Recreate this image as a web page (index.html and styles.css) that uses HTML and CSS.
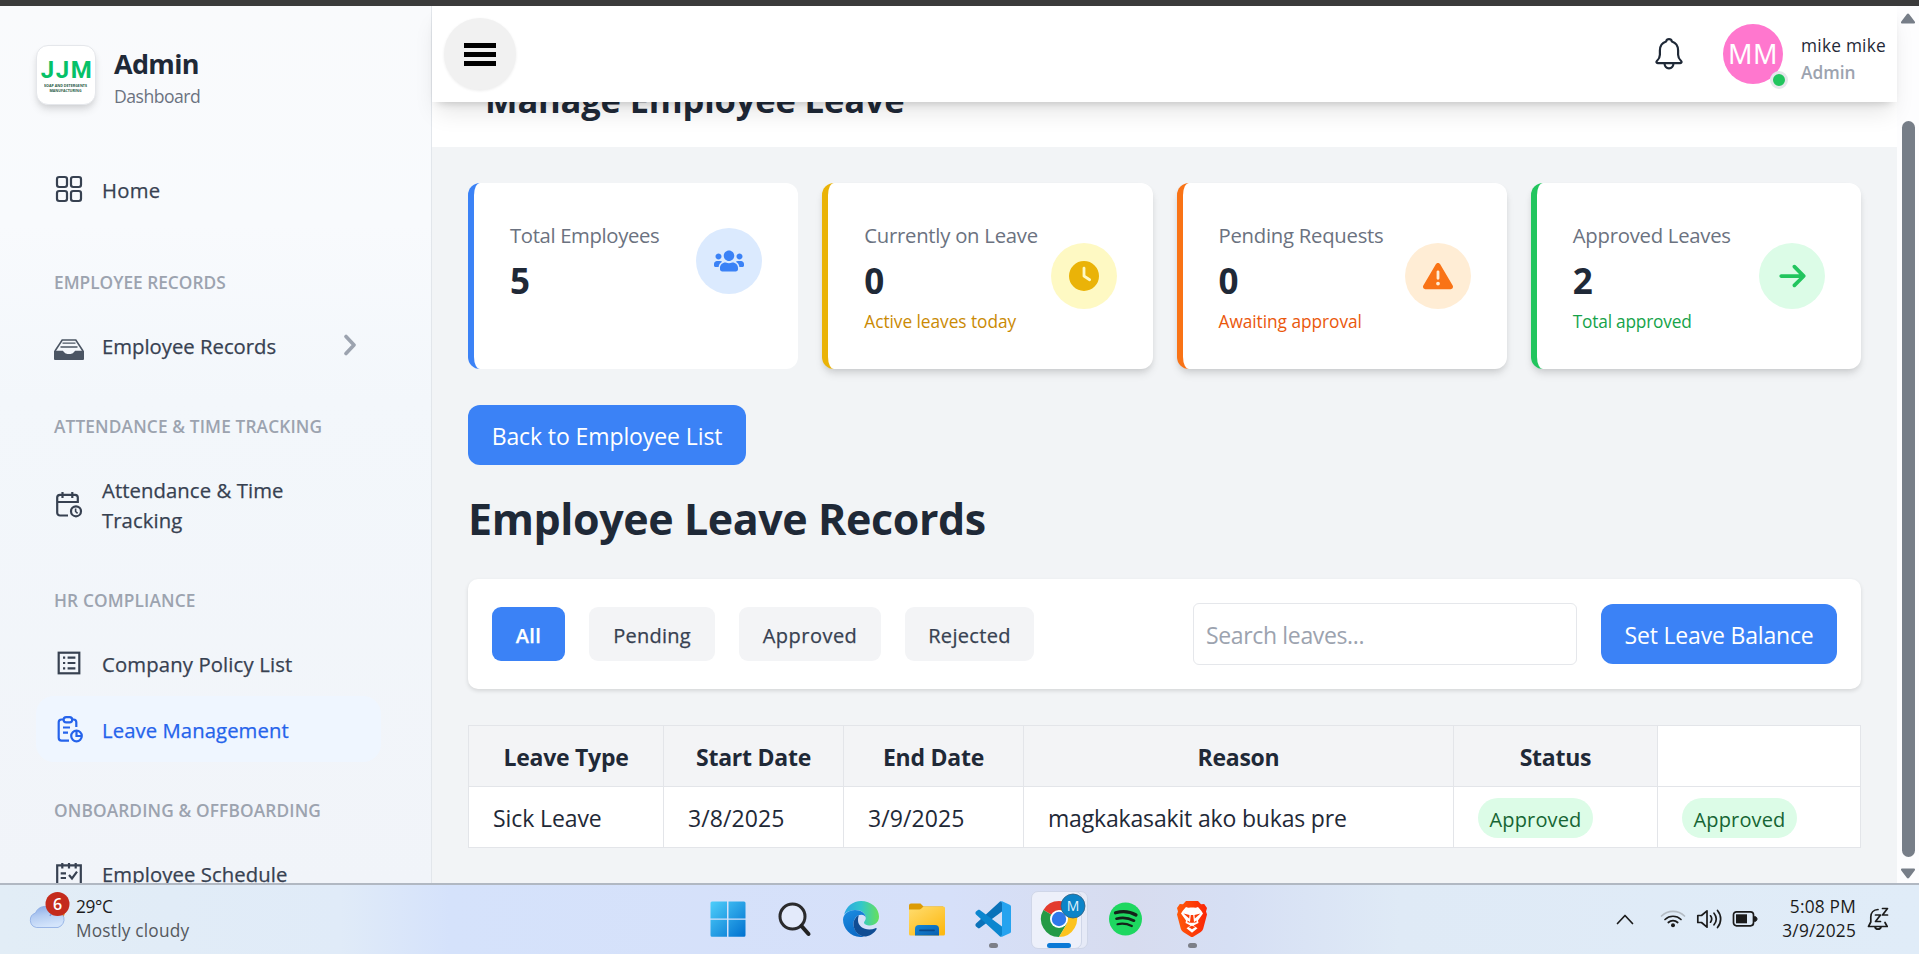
FILE: index.html
```html
<!DOCTYPE html>
<html lang="en">
<head>
<meta charset="utf-8">
<title>Manage Employee Leave</title>
<link rel="stylesheet" href="styles.css">
</head>
<body>
<div class="screen">
  <div class="window-edge"></div>
  <div class="app">
    <aside class="sidebar">
      <div class="brand">
        <div class="brand-logo">
          <span class="logo-main">JJM</span>
          <svg width="44" height="14" viewBox="0 0 44 14">
            <text class="logo-sub" x="0" y="5" textLength="43" lengthAdjust="spacingAndGlyphs">SOAP AND DETERGENTS</text>
            <text class="logo-sub" x="5.500" y="10.200" textLength="32" lengthAdjust="spacingAndGlyphs">MANUFACTURING</text>
          </svg>
        </div>
        <div class="brand-text">
          <div class="brand-title">Admin</div>
          <div class="brand-sub">Dashboard</div>
        </div>
      </div>
      <nav class="nav">
        <a class="item"><svg class="ico" viewBox="0 0 30 30"><rect x="3" y="3" width="10" height="10" rx="2.200"/><rect x="17" y="3" width="10" height="10" rx="2.200"/><rect x="3" y="17" width="10" height="10" rx="2.200"/><rect x="17" y="17" width="10" height="10" rx="2.200"/></svg><span class="ls-home">Home</span></a>

        <h3 class="group group-first">EMPLOYEE RECORDS</h3>
        <a class="item"><svg class="ico ico-tray" viewBox="0 0 30 30"><path d="M1 21 8.200 10h13.600L29 21" fill="none" stroke-width="1.600"/><path d="M8.500 13.200h13M6.500 17h17" stroke-width="1.300"/><path class="solid" d="M0 20.800h8.800l2.400 2.400 2.200.9h3.200l2.200-.9 2.400-2.400H30V29a1 1 0 0 1-1 1H1a1 1 0 0 1-1-1z"/></svg><span class="ls-rec">Employee Records</span>
          <svg class="chev" width="14" height="22" viewBox="0 0 14 22"><path d="m3 2.500 8 8.500-8 8.500"/></svg></a>

        <h3 class="group">ATTENDANCE &amp; TIME TRACKING</h3>
        <a class="item"><svg class="ico" viewBox="0 0 30 30"><path d="M14 26.500H6a2.800 2.800 0 0 1-2.800-2.800V8.600A2.800 2.800 0 0 1 6 5.800h15a2.800 2.800 0 0 1 2.800 2.800V13H3.500M8.500 3v6M18.300 3v6"/><circle cx="22" cy="22.300" r="5"/><path d="M21.600 19.500v3l2 1.800" stroke-width="1.600"/></svg><span class="ls-att">Attendance &amp; Time<br>Tracking</span></a>

        <h3 class="group">HR COMPLIANCE</h3>
        <a class="item"><svg class="ico" viewBox="0 0 30 30"><rect x="4.700" y="4.700" width="20.600" height="20.600"/><path d="M9 9.700h2.200M9 15h2.200M9 20.300h2.200M13.600 9.700h7.800M13.600 15h7.800M13.600 20.300h7.800"/></svg><span class="ls-pol">Company Policy List</span></a>
        <a class="item item-active"><svg class="ico" viewBox="0 0 30 30"><path d="M15 26.600H7.500a2.800 2.800 0 0 1-2.800-2.800V8.300a2.800 2.800 0 0 1 2.800-2.800H9M18.500 5.500h1a2.800 2.800 0 0 1 2.800 2.800V13"/><rect x="9.600" y="3.200" width="8.600" height="5.200" rx="2.600"/><path d="M9 13.500h7M9 18.700h5"/><circle cx="22.500" cy="22" r="5.300"/><path d="M22.500 16.700V22h5.300"/></svg><span class="ls-att">Leave Management</span></a>

        <h3 class="group">ONBOARDING &amp; OFFBOARDING</h3>
        <a class="item"><svg class="ico" viewBox="0 0 30 30"><path d="M3.200 7.300h23.600V27H3.200zM8.300 5v5.500M15 5v5.500M21.700 5v5.500M6.700 15.300H12M6.700 20H12"/><path d="m15 17 3 3.500 5-6.800"/></svg><span class="ls-att">Employee Schedule</span></a>
      </nav>
    </aside>

    <main class="main">
      <header class="topbar">
        <button class="burger"><i></i><i></i><i></i></button>
        <div class="account">
          <svg class="bell" width="30" height="34" viewBox="0 0 30 34"><path d="M15 2.200c1.600 0 2.600 1 2.900 2.300 4 1.300 6.200 4.800 6.200 9v4.200c0 2.700 1.200 4.600 3 6.300.9.900.5 2.100-.8 2.100H3.700c-1.300 0-1.700-1.200-.8-2.100 1.800-1.700 3-3.600 3-6.300v-4.200c0-4.200 2.200-7.700 6.200-9 .3-1.300 1.300-2.300 2.900-2.300z"/><path d="M10.500 26.500c.3 3 2 4.800 4.500 4.800s4.200-1.800 4.500-4.800"/></svg>
          <div class="avatar">MM<span class="online"></span></div>
          <div class="who"><div class="who-name">mike mike</div><div class="who-role">Admin</div></div>
        </div>
      </header>
      <div class="title-band"><h1>Manage Employee Leave</h1></div>

      <div class="content">
        <section class="cards">
          <div class="card card-blue">
            <div><div class="c-label ls-te">Total Employees</div><div class="c-num">5</div></div>
            <div class="c-ico"><svg width="30" height="30" viewBox="0 0 640 512"><path d="M96 224c35.300 0 64-28.700 64-64s-28.700-64-64-64-64 28.700-64 64 28.700 64 64 64zm448 0c35.300 0 64-28.700 64-64s-28.700-64-64-64-64 28.700-64 64 28.700 64 64 64zm32 32h-64c-17.600 0-33.500 7.100-45.100 18.600 40.300 22.100 68.900 62 75.100 109.400h66c17.700 0 32-14.300 32-32v-32c0-35.300-28.700-64-64-64zm-256 0c61.900 0 112-50.100 112-112S381.900 32 320 32 208 82.100 208 144s50.100 112 112 112zm76.800 32h-8.300c-20.800 10-43.900 16-68.500 16s-47.600-6-68.500-16h-8.300C179.600 288 128 339.600 128 403.200V432c0 26.500 21.500 48 48 48h288c26.500 0 48-21.500 48-48v-28.800c0-63.600-51.600-115.200-115.200-115.200zm-223.700-13.400C161.500 263.100 145.600 256 128 256H64c-35.300 0-64 28.700-64 64v32c0 17.700 14.300 32 32 32h65.900c6.300-47.400 34.900-87.300 75.200-109.400z"/></svg></div>
          </div>
          <div class="card card-yellow raised">
            <div><div class="c-label">Currently on Leave</div><div class="c-num">0</div><div class="c-sub">Active leaves today</div></div>
            <div class="c-ico"><svg width="30" height="30" viewBox="0 0 512 512"><path d="M256 0a256 256 0 1 1 0 512A256 256 0 1 1 256 0zM232 120V256c0 8 4 15.500 10.700 20l96 64c11 7.400 25.900 4.400 33.300-6.700s4.400-25.900-6.700-33.300L280 243.200V120c0-13.300-10.700-24-24-24s-24 10.700-24 24z"/></svg></div>
          </div>
          <div class="card card-orange raised">
            <div><div class="c-label">Pending Requests</div><div class="c-num">0</div><div class="c-sub">Awaiting approval</div></div>
            <div class="c-ico"><svg width="30" height="30" viewBox="0 0 512 512"><path d="M256 32c14.200 0 27.300 7.500 34.500 19.800l216 368c7.300 12.400 7.300 27.700 .2 40.100S486.300 480 472 480H40c-14.300 0-27.600-7.700-34.700-20.100s-7-27.800 .2-40.100l216-368C228.700 39.500 241.800 32 256 32zm0 128c-13.300 0-24 10.700-24 24V296c0 13.300 10.700 24 24 24s24-10.700 24-24V184c0-13.300-10.700-24-24-24zm32 224a32 32 0 1 0 -64 0 32 32 0 1 0 64 0z"/></svg></div>
          </div>
          <div class="card card-green raised">
            <div><div class="c-label">Approved Leaves</div><div class="c-num">2</div><div class="c-sub ls-ta">Total approved</div></div>
            <div class="c-ico"><svg width="27" height="30" viewBox="0 0 448 512"><path d="M438.600 278.600c12.500-12.500 12.500-32.800 0-45.300l-160-160c-12.500-12.500-32.800-12.500-45.300 0s-12.500 32.800 0 45.300L338.800 224H32c-17.700 0-32 14.300-32 32s14.300 32 32 32H338.700L233.400 393.400c-12.500 12.500-12.500 32.800 0 45.300s32.800 12.500 45.300 0l160-160z"/></svg></div>
          </div>
        </section>

        <button class="btn back">Back to Employee List</button>
        <h2>Employee Leave Records</h2>

        <section class="filters">
          <div class="pills">
            <button class="pill pill-on">All</button>
            <button class="pill pill-pending">Pending</button>
            <button class="pill pill-approved">Approved</button>
            <button class="pill pill-rejected">Rejected</button>
          </div>
          <div class="tools">
            <input class="search" type="text" placeholder="Search leaves...">
            <button class="btn balance">Set Leave Balance</button>
          </div>
        </section>

        <table class="leaves">
          <colgroup><col class="w-type"><col class="w-date"><col class="w-date"><col class="w-reason"><col class="w-status"><col></colgroup>
          <thead><tr><th>Leave Type</th><th>Start Date</th><th>End Date</th><th>Reason</th><th>Status</th><td></td></tr></thead>
          <tbody><tr><td>Sick Leave</td><td class="num">3/8/2025</td><td class="num">3/9/2025</td><td class="reason">magkakasakit ako bukas pre</td><td><span class="badge">Approved</span></td><td><span class="badge">Approved</span></td></tr></tbody>
        </table>
      </div>
    </main>

    <div class="scrollbar">
      <svg width="16" height="11" viewBox="0 0 16 11"><path d="M6.800 1.200a1.500 1.500 0 0 1 2.400 0l5.500 7.300c.7 1 .2 2-1 2H2.300c-1.200 0-1.700-1-1-2z"/></svg>
      <div class="thumb"></div>
      <svg width="16" height="11" viewBox="0 0 16 11"><path d="M6.800 9.800a1.500 1.500 0 0 0 2.400 0l5.500-7.300c.7-1 .2-2-1-2H2.300c-1.200 0-1.700 1-1 2z"/></svg>
    </div>
  </div>

  <footer class="taskbar">
    <div class="weather">
      <svg width="42" height="40" viewBox="0 0 42 40">
        <defs><linearGradient id="cl" x1="0" y1="0" x2=".3" y2="1"><stop offset="0" stop-color="#86a9e6"/><stop offset=".5" stop-color="#b5cdf2"/><stop offset="1" stop-color="#d3e4fb"/></linearGradient></defs>
        <circle cx="28" cy="21" r="9" fill="#f28a1c"/>
        <path d="M8.500 36.500a7.500 7.500 0 0 1-1-14.500A10.500 10.500 0 0 1 26 20a8.500 8.500 0 0 1 4 16.500z" fill="url(#cl)" stroke="#7fa2e0" stroke-width=".7"/>
        <path d="M22 25a7 7 0 0 1 12-2" fill="none" stroke="#7c9fe0" stroke-width="1.500"/>
        <circle cx="29.500" cy="13" r="12" fill="#c42b1c"/>
        <text class="count" x="29.500" y="19" text-anchor="middle">6</text>
      </svg>
      <div class="w-text"><div class="temp">29°C</div><div class="sky">Mostly cloudy</div></div>
    </div>

    <div class="dock">
      <div class="slot"><svg width="36" height="36" viewBox="0 0 36 36"><defs><linearGradient id="wn" gradientUnits="userSpaceOnUse" x1="0" y1="0" x2="36" y2="36"><stop offset="0" stop-color="#4fd0fb"/><stop offset="1" stop-color="#0070cf"/></linearGradient></defs><path fill="url(#wn)" d="M2 .5h15v17H.5V2A1.500 1.500 0 0 1 2 .5zM18.500.5H34A1.500 1.500 0 0 1 35.500 2v15.500h-17zM.5 18.700H17v17H2a1.500 1.500 0 0 1-1.500-1.500zM18.500 18.700h17v15.500a1.500 1.500 0 0 1-1.500 1.500H18.500z"/></svg></div>
      <div class="slot"><svg width="36" height="36" viewBox="0 0 36 36"><circle cx="16.500" cy="15.500" r="12.500" fill="#e3eafa" stroke="#2b2b2d" stroke-width="3"/><path d="m25.500 25 7 8" stroke="#222" stroke-width="4" stroke-linecap="round"/></svg></div>
      <div class="slot"><svg width="36" height="36" viewBox="0 0 36 36"><defs><linearGradient id="e1" x1="0" y1=".3" x2="1" y2=".3"><stop offset="0" stop-color="#2aa5e6"/><stop offset=".5" stop-color="#33c8c9"/><stop offset="1" stop-color="#66e05a"/></linearGradient><linearGradient id="e2" x1=".2" y1="0" x2=".6" y2="1"><stop offset="0" stop-color="#1b8be0"/><stop offset="1" stop-color="#0a68c4"/></linearGradient></defs>
        <path fill="url(#e1)" d="M1 14C3 5.500 10 0 18 0c10 0 18 7 18 15.500 0 5.500-4 9-9 9-3.500 0-6-1.400-6-3 0-1 1.800-2 1.800-4.500 0-4.500-4.300-8-10-8C7 9 2.500 11.500 1 14z"/>
        <path fill="url(#e2)" d="M0 18.500C.5 12.500 6 9 12 9c6 0 10.800 3.500 10.800 8 0-2-2-3.300-4.500-3.300-4.800 0-7.800 4.500-7.800 9.300 0 6 4.500 11.500 10.500 12.800C9.500 37.500 0 29 0 18.500z"/>
        <path fill="#104d94" d="M16 14.200c-3.200 1.300-5.500 4.800-5.500 8.800 0 7 5.500 13 12.500 12.500 4.800-1 8.700-4 10.500-7.300.4-.9-.3-1.400-1-1-8.500 3.500-17.500-.7-17.500-8 0-2 .3-3.800 1-5z"/></svg></div>
      <div class="slot"><svg width="36" height="36" viewBox="0 0 36 36"><defs><linearGradient id="fd" x1="0" y1="0" x2=".8" y2="1"><stop offset="0" stop-color="#ffdd70"/><stop offset="1" stop-color="#fdb913"/></linearGradient><linearGradient id="fb" x1="0" y1="0" x2="1" y2="1"><stop offset="0" stop-color="#1286d8"/><stop offset="1" stop-color="#0b5fad"/></linearGradient></defs><path fill="#dc9b05" d="M0 4.500A2 2 0 0 1 2 2.500h9.500l3 3H34V10H0z"/><path fill="url(#fd)" d="M0 8.500h10.500c2 0 3-3 4.500-3h19.500a1.500 1.500 0 0 1 1.500 1.500v26a1.500 1.500 0 0 1-1.500 1.500h-33A1.500 1.500 0 0 1 0 33z"/><path fill="url(#fb)" d="M6 34.500V28a4 4 0 0 1 4-4h16a4 4 0 0 1 4 4v6.500z"/><path d="M11 29.300h14" stroke="#084a8c" stroke-width="1.800" stroke-linecap="round"/></svg></div>
      <div class="slot"><svg width="36" height="36" viewBox="0 0 36 36"><path fill="#0a72b9" d="m1 25.500 2 1.600c.5.400 1.200.4 1.800 0L27 10.500V1.500L25.500.3c-.5.200-.6.300-1 .7L1 22.500c-.8.800-.8 2.200 0 3z"/><path fill="#0b86cf" d="M1 10.500 3 9c.5-.4 1.200-.4 1.800 0L27 25.500v9l-1.500 1.200c-.5-.2-.6-.3-1-.7L1 13.500c-.8-.8-.8-2.200 0-3z"/><path fill="#26a3ef" d="M26.500 0 34.700 3.800A2 2 0 0 1 36 5.700v24.600a2 2 0 0 1-1.300 1.900L26.500 36c-.9.200-1.500-.1-2-.6 1 .6 2.500 0 2.500-1.500V2c0-1.400-1.500-2-2.500-1.400.5-.5 1.200-.8 2-.6z"/></svg><b class="dot"></b></div>
      <div class="slot"><div class="tile tile-back"></div><div class="tile"></div>
        <svg class="chrome" width="50" height="48" viewBox="0 0 50 48"><path fill="#e33b2e" d="M20 29 4.400 20A18 18 0 0 1 35.600 20z"/><path fill="#249a46" d="M20 29 4.400 20A18 18 0 0 0 20 47l8-13.500z"/><path fill="#fcc31e" d="M20 20h15.600A18 18 0 0 1 20 47l8-13.500z"/><circle cx="20" cy="29" r="9" fill="#fff"/><circle cx="20" cy="29" r="7.200" fill="#2f78ea"/><circle cx="34" cy="16" r="12" fill="#0c84c8" stroke="#35617f" stroke-width=".8"/><text class="profile" x="34" y="21" text-anchor="middle">M</text></svg><b class="bar"></b></div>
      <div class="slot"><svg width="36" height="36" viewBox="0 0 36 36"><circle cx="17.500" cy="18" r="16.500" fill="#1ed760"/><g fill="none" stroke="#14221a" stroke-linecap="round"><path d="M7.500 11.800c7-2 14.500-1.300 20.500 2.200" stroke-width="3.200"/><path d="M8.500 17.700c6-1.600 12-.9 17.500 2" stroke-width="2.700"/><path d="M9.500 23.200c5-1.200 9.500-.6 14.300 1.800" stroke-width="2.200"/></g></svg></div>
      <div class="slot"><svg width="36" height="36" viewBox="0 0 36 36"><defs><linearGradient id="br" x1="0" x2="1"><stop offset="0" stop-color="#ff5a0a"/><stop offset="1" stop-color="#fb2506"/></linearGradient></defs><path fill="url(#br)" d="M12 0h12l3 3.300 3.200-.3L33 7l-1 3.500 1 3-3.800 14.300a6 6 0 0 1-2.400 3.300L18 36.500l-8.800-5.400a6 6 0 0 1-2.400-3.300L3 13.500l1-3L3 7l2.800-4L9 3.300z"/><path fill="#fff" d="M18 6.500c2 0 4 .8 6-.5 2.500 2.500 4.500 5.500 5 6.500l-5 7 .5 2.500-5 2.500 4 2.800-5.500 4.400-5.500-4.400 4-2.800-5-2.500.5-2.500-5-7c.5-1 2.500-4 5-6.500 2 1.300 4 .5 6 .5z"/><path fill="#fb3c08" d="m9.500 12.500 6 1.500-.3 3.500zM26.500 12.500l-6 1.500.3 3.500zM16.800 14h2.400l.8 7-2 1-2-1zM13.500 19.500l4 2.500-4-.7zM22.500 19.500l-4 2.500 4-.7zM14.500 26l3.500-1.300 3.500 1.300-3.500 2.300z"/></svg><b class="dot"></b></div>
    </div>

    <div class="tray">
      <svg width="18" height="12" viewBox="0 0 18 12"><path class="ln" d="m1.500 10.500 7.500-8 7.500 8"/></svg>
      <svg class="t-wifi" width="26" height="20" viewBox="0 0 26 20"><path class="ln faint" d="M1.500 8a16.500 16.500 0 0 1 23 0"/><path class="ln" d="M5 11.500a11.500 11.500 0 0 1 16 0M8.300 14.500a7 7 0 0 1 9.400 0"/><circle cx="13" cy="17.300" r="2" fill="#1b1b1b"/></svg>
      <svg class="t-snd" width="26" height="22" viewBox="0 0 26 22"><path class="ln" d="M1.800 7.500h3.700L11 2.800v16.400l-5.500-4.700H1.800zM14.500 7.800c1.500 2 1.500 4.400 0 6.400M18 5.200c2.800 3.500 2.800 8 0 11.600M21.500 2.500c4.200 5 4.200 12 0 17"/></svg>
      <svg class="t-bat" width="26" height="18" viewBox="0 0 26 18"><rect class="ln" x="1.500" y="1.800" width="20" height="14" rx="3"/><rect x="4" y="4.300" width="11" height="9" fill="#1b1b1b"/><path d="M22.500 6.500c2 .3 2.500 1.300 2.500 2.500s-.5 2.200-2.500 2.500z" fill="#1b1b1b" stroke="#1b1b1b"/></svg>
      <div class="clock"><div>5:08 PM</div><div>3/9/2025</div></div>
      <svg class="t-bell" width="24" height="26" viewBox="0 0 24 26"><path class="ln" d="M11 3.500c-4.500.2-7.200 3.500-7.200 7.500v5L1.500 20.500h18.700l-2.200-4M8 21c.5 2.800 5.500 2.800 6 0"/><path class="ln" d="M8.500 9h5l-5 6.500h5M15.500 2.500h5l-5 6.500h5"/></svg>
    </div>
  </footer>
</div>
</body>
</html>
```
FILE: styles.css
```css
*{box-sizing:border-box}
body{margin:0;font-family:"Open Sans","Noto Sans",sans-serif;color:#1f2937;overflow:hidden}
h1,h2,h3{margin:0}
button,input{font-family:inherit;border:0;margin:0}
svg{display:block;flex:none}
.screen{width:1919px;height:954px;display:flex;flex-direction:column;overflow:hidden}
.window-edge{height:6px;background:#3b3b3b;flex:none}
.app{height:877px;flex:none;display:flex;overflow:hidden}

/* Sidebar */
.sidebar{width:432px;flex:none;border-right:1px solid #e2e6eb;background:linear-gradient(180deg,#f9fafc 0%,#f8fafd 25%,#f3f7fb 45%,#f1f4f9 100%);padding:39px 50px 0 36px;overflow:hidden}
.brand{display:flex;height:60px;gap:18px}
.brand-logo{width:60px;height:60px;border:1px solid #e5e7eb;border-radius:12px;background:#fff;box-shadow:0 6px 9px -1px rgba(0,0,0,.1),0 3px 6px -2px rgba(0,0,0,.1);display:flex;flex-direction:column;align-items:center;padding-top:12px}
.logo-main{font:700 24px/24px Roboto,sans-serif;letter-spacing:1.500px;margin-right:-2px;color:#06c168}
.logo-sub{font:700 4.200px "Open Sans",sans-serif;fill:#1f5a43}
.brand-title{font-size:27px;font-weight:700;line-height:36px;letter-spacing:-.7px;padding-top:1px}
.brand-sub{font-size:17.600px;line-height:24px;letter-spacing:-.5px;color:#6b7280;padding-top:2px}
.nav{padding-top:51px}
.item{display:flex;align-items:center;gap:18px;min-height:66px;padding:18px 18px;border-radius:18px;color:#374151;font-size:20.300px;font-weight:500;line-height:30px;white-space:nowrap}
.item span{position:relative;top:1px;-webkit-text-stroke:.25px currentColor}
.item-active{background:#eff6ff;color:#2563eb}
.ico{width:30px;height:30px;fill:none;stroke:currentColor;stroke-width:2.200}
.ico-tray{color:#4b5563}
.ico-tray .solid{fill:currentColor;stroke:none}
.chev{margin-left:auto;margin-right:6px;fill:none;stroke:#9ca3af;stroke-width:3.600;stroke-linecap:round;stroke-linejoin:round}
.group{margin:36px 0 18px;padding-left:18px;height:24px;line-height:26px;font-size:17.300px;font-weight:600;letter-spacing:.13px;color:#9ca3af;white-space:nowrap}
.group-first{margin-top:48px;letter-spacing:0}
.ls-home{letter-spacing:.3px}
.ls-rec{letter-spacing:0}
.ls-att{letter-spacing:.08px}
.ls-pol{letter-spacing:.14px}

/* Main column */
.main{width:1465px;flex:none;background:#f2f4f6;display:flex;flex-direction:column}
.topbar{height:96px;flex:none;background:#fff;display:flex;justify-content:space-between;align-items:center;padding:0 11px 0 12px;position:relative;z-index:2;box-shadow:0 15px 22px -5px rgba(0,0,0,.1),0 6px 9px -6px rgba(0,0,0,.22)}
.burger{width:72px;height:72px;border-radius:50%;background:#f1f1f1;display:flex;flex-direction:column;align-items:center;justify-content:center;gap:4px;padding:0;box-shadow:0 1px 3px rgba(0,0,0,.08)}
.burger i{width:32px;height:5px;background:#000}
.account{display:flex;align-items:center}
.bell{fill:none;stroke:#1f2937;stroke-width:2.200;stroke-linejoin:round;margin-right:39px}
.avatar{width:60px;height:60px;border-radius:50%;background:#ff77ce;color:#fff;font:400 27px/60px "Noto Sans",sans-serif;text-align:center;letter-spacing:.5px;position:relative;margin-right:18px}
.online{position:absolute;right:-5px;bottom:-5px;width:18px;height:18px;border-radius:50%;background:#22c55e;border:3px solid #e5e7eb}
.who{font-size:17.300px;line-height:27px;padding-top:9px}
.who-name{font-weight:500;letter-spacing:.24px}
.who-role{font-weight:600;color:#9ca3af}
.title-band{height:45px;flex:none;background:#fff;display:flex;align-items:flex-start;padding-left:53px}
h1{font-size:34.500px;line-height:40px;margin-top:-22px;letter-spacing:-.15px}
.content{padding:36px}

.cards{display:grid;grid-template-columns:repeat(4,1fr);gap:24px}
.card{height:186px;border-left:6px solid;border-radius:12px;background:#fff;padding:36px;display:flex;justify-content:space-between;align-items:flex-start;white-space:nowrap}
.card-blue .c-ico{margin-top:9px}
.raised .c-ico{margin-top:24px}
.raised{box-shadow:0 6px 9px -1px rgba(0,0,0,.1),0 3px 6px -2px rgba(0,0,0,.1)}
.c-label{font-size:20.300px;line-height:30px;color:#6b7280;letter-spacing:-.25px;padding-top:1px}
.ls-te{letter-spacing:-.35px}
.c-num{font-size:35px;font-weight:700;line-height:48px;padding-top:7px}
.c-sub{font-size:17.300px;line-height:24px;padding-top:5px;letter-spacing:-.04px}
.ls-ta{letter-spacing:-.2px}
.c-ico{width:66px;height:66px;flex:none;border-radius:50%;display:grid;place-items:center;fill:currentColor}
.card-blue{border-color:#3b82f6}.card-blue .c-ico{background:#dbeafe;color:#3b82f6}
.card-yellow{border-color:#eab308}.card-yellow .c-ico{background:#fef9c3;color:#eab308}.card-yellow .c-sub{color:#ca8a04}
.card-orange{border-color:#f97316}.card-orange .c-ico{background:#ffedd5;color:#f97316}.card-orange .c-sub{color:#ea580c}
.card-green{border-color:#22c55e}.card-green .c-ico{background:#dcfce7;color:#22c55e}.card-green .c-sub{color:#16a34a}

.btn{height:60px;border-radius:12px;background:#3b82f6;color:#fff;font-size:23px;white-space:nowrap;padding:2px 0 0}
.back{display:block;width:278px;margin-top:36px;letter-spacing:-.1px}
h2{font-size:43px;line-height:60px;margin-top:24px;letter-spacing:-.42px}
.filters{height:110px;margin-top:30px;background:#fff;border-radius:10px;box-shadow:0 2px 4px rgba(0,0,0,.12);padding:0 24px;display:flex;align-items:center;justify-content:space-between}
.pills,.tools{display:flex;align-items:center;gap:24px}
.pill{height:54px;border-radius:9px;background:#f3f4f6;color:#374151;font-size:20px;font-weight:500;-webkit-text-stroke:.25px currentColor;padding:3px 0 0}
.pill-on{width:73px;background:#3b82f6;color:#fff;font-weight:600;letter-spacing:.4px}
.pill-pending{width:126px;letter-spacing:.24px}
.pill-approved{width:142px;letter-spacing:.48px}
.pill-rejected{width:129px;letter-spacing:.32px}
.search{width:384px;height:62px;border:1px solid #e5e7eb;border-radius:6px;background:#fff;font-size:23px;letter-spacing:-.35px;padding:2px 12px 0;outline:0}
.search::placeholder{color:#9ca3af;opacity:1}
.balance{width:236px;letter-spacing:-.18px}

.leaves{width:1393px;margin-top:36px;table-layout:fixed;border-collapse:collapse;background:#fff;font-size:23px;letter-spacing:-.1px}
.w-type{width:195px}.w-date{width:180px}.w-reason{width:430px}.w-status{width:204px}
.leaves th,.leaves td{height:61px;border:1px solid #e3e5e9;padding:2px 24px 0;text-align:left;white-space:nowrap}
.leaves th{background:#f3f4f6;text-align:center;font-weight:700;letter-spacing:-.25px;padding:2px 0 0}
.leaves .num{letter-spacing:.1px}
.leaves .reason{letter-spacing:-.17px}
.badge{display:block;width:115px;height:40px;border-radius:20px;background:#dcfce7;color:#166534;font-size:20px;line-height:43px;text-align:center;letter-spacing:.14px}

/* Page scrollbar */
.scrollbar{width:22px;flex:none;background:#fdfdfe;display:flex;flex-direction:column;align-items:center;padding:7px 0 4px;fill:#777e88}
.thumb{width:13px;height:736px;margin:97px 0 auto;border-radius:7px;background:#777e88}

/* Taskbar */
.taskbar{height:71px;flex:none;border-top:2px solid #b1b8c2;background:linear-gradient(90deg,#e2edf6 0,#e0ebf8 340px,#d5e2fb 450px,#d6e0f9 950px,#d7dcef 1130px,#d6dff4 1230px,#dfeaf6 1400px,#e0ecf8 1919px);display:flex;align-items:flex-start;justify-content:space-between;color:#1b1b1b;position:relative}
.weather{width:695px;flex:none;display:flex;padding:6px 0 0 28px;gap:6px;font-size:17.300px;line-height:24px}
.count{font:600 16px "Open Sans",sans-serif;fill:#fff}
.temp{letter-spacing:-.35px;margin-top:4px}
.sky{color:#55595e;letter-spacing:.2px}
.dock{display:flex}
.slot{width:66.300px;height:69px;position:relative;display:flex;justify-content:center;padding-top:16px}
.dot,.bar{position:absolute;left:28.500px;top:58px;width:9px;height:5px;border-radius:3px;background:#7c7f88}
.bar{left:21px;width:24px;background:#0b79d6}
.tile{position:absolute;left:5px;top:6px;width:51px;height:58px;border-radius:7px;background:#edf0fa;border:1px solid #cfd6e8}
.tile-back{left:11px;background:#e6eaf7}
.chrome{position:absolute;left:13px;top:5px}
.profile{font:400 14px "Open Sans",sans-serif;fill:#dff0fb}
.tray{flex:1;display:flex;justify-content:flex-end;padding:0 28px 0 0;height:69px;align-items:flex-start}
.tray>svg{margin-top:28px}
.ln{fill:none;stroke:#1b1b1b;stroke-width:1.700;stroke-linejoin:round;stroke-linecap:round}
.faint{stroke:#b4bcc4}
.tray>.t-wifi{margin:23px 0 0 26px}
.tray>.t-snd{margin:23px 0 0 10px}
.tray>.t-bat{margin:25px 0 0 10px}
.clock{width:98px;text-align:right;font-size:17.300px;line-height:24px;letter-spacing:.22px;margin-top:10px}
.tray>.t-bell{margin:21px 0 0 11px}
```
